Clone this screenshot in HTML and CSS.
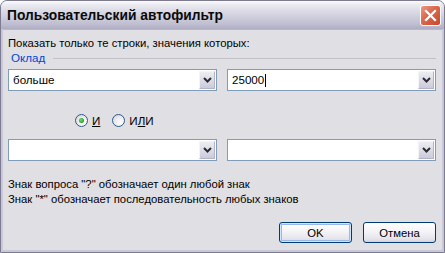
FILE: index.html
```html
<!DOCTYPE html>
<html>
<head>
<meta charset="utf-8">
<link rel="stylesheet" href="styles.css">
</head>
<body>
<div class="window">
  <div class="titlebar">
    <span class="title">Пользовательский автофильтр</span>
    <span class="close"><svg width="13" height="13" viewBox="0 0 13 13"><path d="M2 2 L11 11 M11 2 L2 11" stroke="#fff" stroke-width="2.2" stroke-linecap="square"/></svg></span>
  </div>
  <div class="client">
    <div class="line first">Показать только те строки, значения которых:</div>
    <div class="group">
      <span class="group-label">Оклад</span>
      <span class="group-rule"></span>
    </div>
    <div class="combos row1">
      <div class="combo"><span class="combo-text">больше</span><span class="drop"><svg width="9" height="6" viewBox="0 0 9 6"><path d="M1 1 L4.5 4.5 L8 1" fill="none" stroke="#2b2b33" stroke-width="2"/></svg></span></div>
      <div class="combo"><span class="combo-text">25000<span class="caret"></span></span><span class="drop"><svg width="9" height="6" viewBox="0 0 9 6"><path d="M1 1 L4.5 4.5 L8 1" fill="none" stroke="#2b2b33" stroke-width="2"/></svg></span></div>
    </div>
    <div class="radios">
      <span class="radio checked"><span class="dot"></span></span><span class="rlabel"><u>И</u></span>
      <span class="radio second"></span><span class="rlabel">И<u>Л</u>И</span>
    </div>
    <div class="combos row2">
      <div class="combo"><span class="combo-text"></span><span class="drop"><svg width="9" height="6" viewBox="0 0 9 6"><path d="M1 1 L4.5 4.5 L8 1" fill="none" stroke="#2b2b33" stroke-width="2"/></svg></span></div>
      <div class="combo"><span class="combo-text"></span><span class="drop"><svg width="9" height="6" viewBox="0 0 9 6"><path d="M1 1 L4.5 4.5 L8 1" fill="none" stroke="#2b2b33" stroke-width="2"/></svg></span></div>
    </div>
    <div class="line hint1">Знак вопроса "?" обозначает один любой знак</div>
    <div class="line hint2">Знак "*" обозначает последовательность любых знаков</div>
    <div class="buttons">
      <button class="btn default">OK</button>
      <button class="btn">Отмена</button>
    </div>
  </div>
</div>
</body>
</html>
```
FILE: styles.css
```css
html, body {
  margin: 0;
  padding: 0;
  background: #ffffff;
}
.window {
  width: 445px;
  height: 253px;
  box-sizing: border-box;
  border: 1px solid #7c7b92;
  border-radius: 7px 7px 0 0;
  background: #c9c8d8;
  display: flex;
  flex-direction: column;
  font-family: "Liberation Sans", Arial, sans-serif;
  font-size: 11.3px;
  color: #000;
  overflow: hidden;
}
.titlebar {
  height: 28px;
  flex: none;
  display: flex;
  align-items: center;
  justify-content: space-between;
  padding: 0 3px 0 6px;
  background: linear-gradient(to bottom, #fdfdfe 0%, #ececf2 12%, #dcdbe6 35%, #cdccdb 60%, #c0bfd1 82%, #aeadc3 100%);
}
.title {
  font-weight: bold;
  font-size: 13.8px;
  color: #0a0a0a;
  margin-top: 1px;
}
.close {
  width: 21px;
  height: 21px;
  box-sizing: border-box;
  border: 1px solid #ffffff;
  border-radius: 3px;
  background: linear-gradient(135deg, #e99a85 0%, #dc6a4f 40%, #c8472c 100%);
  display: flex;
  align-items: center;
  justify-content: center;
  margin-top: 1px;
}
.client {
  flex: 1;
  margin: 0 2px 2px 2px;
  background: #e0dfe3;
  display: flex;
  flex-direction: column;
  padding: 0 6px 0 5px;
  border-top: 1px solid #b9b8c9;
}
.line {
  height: 13px;
  line-height: 13px;
  white-space: nowrap;
}
.first {
  margin-top: 7px;
}
.group {
  display: flex;
  align-items: center;
  height: 13px;
  margin-top: 1px;
  padding-left: 3px;
}
.group-label {
  color: #0046d5;
  font-size: 11.6px;
  line-height: 13px;
}
.group-rule {
  flex: 1;
  height: 1px;
  background: #c2c1c8;
  margin-left: 8px;
  margin-top: 2px;
}
.combos {
  display: flex;
  gap: 10px;
  height: 22px;
}
.row1 { margin-top: 5px; }
.row2 { margin-top: 12px; }
.combo {
  width: 209px;
  height: 22px;
  box-sizing: border-box;
  border: 1px solid #7f9db9;
  background: #ffffff;
  display: flex;
  align-items: stretch;
  padding: 1px;
}
.combo-text {
  flex: 1;
  padding-left: 3px;
  line-height: 18px;
  font-size: 11.6px;
  display: flex;
  align-items: center;
}
.caret {
  display: inline-block;
  width: 1px;
  height: 13px;
  background: #000;
  margin-left: 1px;
}
.drop {
  width: 16px;
  box-sizing: border-box;
  border: 1px solid #b3b2c6;
  border-top-color: #f4f4f8;
  border-left-color: #f4f4f8;
  background: linear-gradient(to bottom, #ececf2 0%, #dddde7 50%, #cbcadb 100%);
  display: flex;
  align-items: center;
  justify-content: center;
}
.radios {
  display: flex;
  align-items: center;
  height: 13px;
  margin-top: 23px;
  padding-left: 67px;
  font-size: 11.6px;
}
.radio {
  width: 13px;
  height: 13px;
  box-sizing: border-box;
  border-radius: 50%;
  border: 1px solid #2f5a8a;
  background: radial-gradient(circle at 70% 70%, #ffffff 0%, #f0f0f3 40%, #cfd0da 100%);
  display: flex;
  align-items: center;
  justify-content: center;
}
.dot {
  width: 5px;
  height: 5px;
  border-radius: 50%;
  background: radial-gradient(circle at 40% 40%, #6fe06f 0%, #21a121 70%);
}
.rlabel {
  margin-left: 4px;
  line-height: 13px;
}
.radio.second {
  margin-left: 12px;
}
.hint1 {
  margin-top: 16px;
  height: 15px;
  line-height: 15px;
}
.hint2 {
  height: 15px;
  line-height: 15px;
}
.buttons {
  display: flex;
  justify-content: flex-end;
  gap: 11px;
  margin-top: 15px;
  height: 21px;
}
.btn {
  width: 73px;
  height: 21px;
  box-sizing: border-box;
  border: 1px solid #003c74;
  border-radius: 3px;
  background: linear-gradient(to bottom, #ffffff 0%, #f4f4f6 45%, #e4e3ea 85%, #d2d1dc 100%);
  font-family: "Liberation Sans", Arial, sans-serif;
  font-size: 11.3px;
  font-weight: normal;
  color: #000;
  padding: 0;
}
.btn.default {
  box-shadow: inset 0 0 0 1px #cee7ff, inset 0 0 0 2px #98b8ea;
}
```
